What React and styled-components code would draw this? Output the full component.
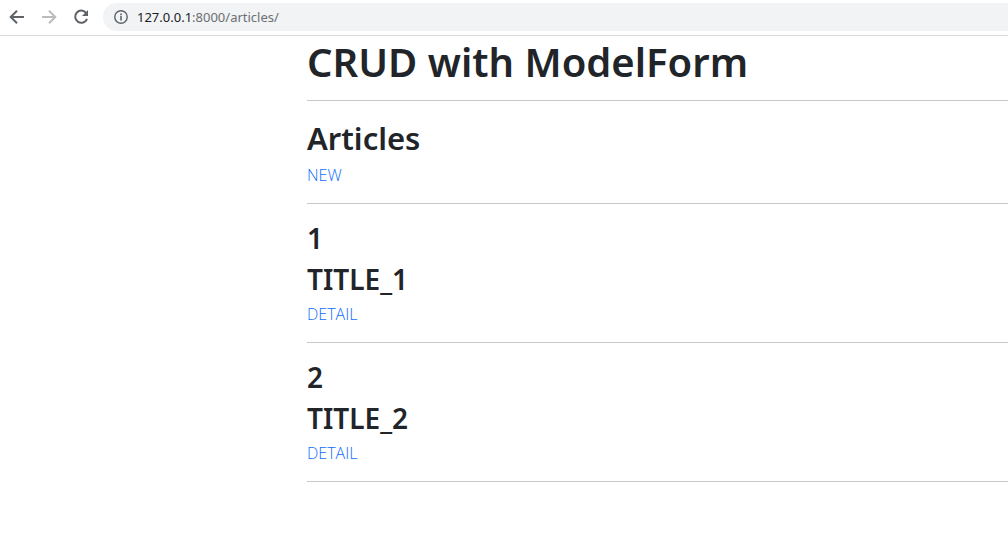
import React from "react";
import styled, { createGlobalStyle, css } from "styled-components";

const GlobalStyle = createGlobalStyle`
  * { box-sizing: border-box; }
  body {
    margin: 0;
    background: #fff;
    color: #212529;
    font: 400 16px/24px "Noto Sans", "Open Sans", sans-serif;
  }
`;

const Toolbar = styled.header`
  display: flex;
  align-items: center;
  height: 36px;
  padding: 3px 0 4px 8px;
  border-bottom: 1px solid #dadce0;
`;

const NavButtons = styled.nav`
  display: flex;
  gap: 14px;
  margin-right: 13px;
`;

const NavButton = styled.button`
  display: flex;
  width: 18px;
  height: 18px;
  padding: 0;
  border: 0;
  background: none;
  color: ${(p) => (p.disabled ? "#babcbe" : "#5f6368")};
`;

const AddressBar = styled.div`
  display: flex;
  flex: 1;
  align-items: center;
  gap: 8px;
  height: 28px;
  padding-left: 10px;
  border-radius: 14px 0 0 14px;
  background: #f1f3f4;
  color: #5f6368;
`;

const Address = styled.span`
  font: 400 13px/20px "Noto Sans", sans-serif;
  color: #6b6f73;
`;

const Host = styled.span`
  color: #202124;
`;

const Page = styled.main`
  padding-left: 307px;
`;

const headingStyle = css`
  margin: 0;
  padding: 2px 0 6px;
  font-weight: 600;
`;

const Title = styled.h1`
  ${headingStyle}
  font-size: 40px;
  line-height: 48px;
`;

const Heading = styled.h2`
  ${headingStyle}
  font-size: 31px;
  line-height: 38px;
`;

const ItemHeading = styled.h3`
  ${headingStyle}
  font-size: 28px;
  line-height: 33px;
`;

const Rule = styled.hr`
  height: 1px;
  margin: 16px 0;
  border: 0;
  background: #c8c9ca;

  ${Title} + & {
    margin-top: 8px;
  }
`;

const TextLink = styled.a`
  display: block;
  width: fit-content;
  color: #0d6efd;
  font-family: "Open Sans", sans-serif;
  font-weight: 300;
  text-decoration: none;
`;

const articles = [
  { id: 1, title: "TITLE_1" },
  { id: 2, title: "TITLE_2" },
];

function Icon({ children, size = 18 }) {
  return (
    <svg width={size} height={size} viewBox="0 0 18 18" fill="none" stroke="currentColor" strokeWidth="2" aria-hidden="true">
      {children}
    </svg>
  );
}

export default function App() {
  return (
    <>
      <GlobalStyle />
      <Toolbar>
        <NavButtons aria-label="Browser">
          <NavButton aria-label="Back">
            <Icon><path d="M16 9H3.5M9 2.7 2.7 9 9 15.3" /></Icon>
          </NavButton>
          <NavButton aria-label="Forward" disabled>
            <Icon><path d="M2 9h12.5M9 2.7 15.3 9 9 15.3" /></Icon>
          </NavButton>
          <NavButton aria-label="Reload">
            <Icon>
              <path d="M14.3 5.2A6.1 6.1 0 1 0 15 10.8" />
              <path d="M16 2v6h-6z" fill="currentColor" stroke="none" />
            </Icon>
          </NavButton>
        </NavButtons>
        <AddressBar>
          <Icon size={16}>
            <circle cx="9" cy="9" r="7" strokeWidth="1.6" />
            <path d="M9 8v5M9 5v2" strokeWidth="1.8" />
          </Icon>
          <Address><Host>127.0.0.1</Host>:8000/articles/</Address>
        </AddressBar>
      </Toolbar>
      <Page>
        <Title>CRUD with ModelForm</Title>
        <Rule />
        <Heading>Articles</Heading>
        <TextLink href="/articles/create/">NEW</TextLink>
        <Rule />
        {articles.map((a) => (
          <article key={a.id}>
            <ItemHeading>{a.id}</ItemHeading>
            <ItemHeading>{a.title}</ItemHeading>
            <TextLink href={`/articles/${a.id}/`}>DETAIL</TextLink>
            <Rule />
          </article>
        ))}
      </Page>
    </>
  );
}
